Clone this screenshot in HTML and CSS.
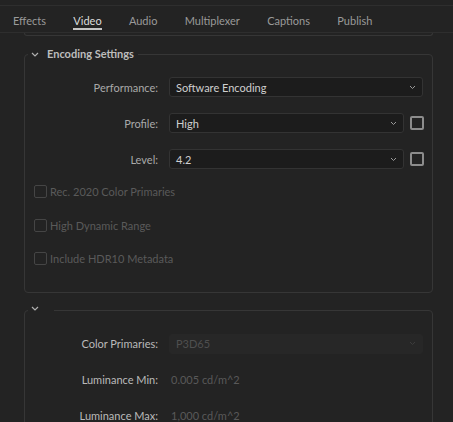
FILE: index.html
```html
<!DOCTYPE html>
<html>
<head>
<meta charset="utf-8">
<link rel="stylesheet" href="styles.css">
</head>
<body>
<div class="top"></div>
<nav class="tabs">
  <span class="tab">Effects</span>
  <span class="tab active">Video</span>
  <span class="tab">Audio</span>
  <span class="tab">Multiplexer</span>
  <span class="tab">Captions</span>
  <span class="tab">Publish</span>
</nav>
<main class="scroll">
  <div class="prev"></div>
  <fieldset class="panel enc">
    <legend class="legend"><svg class="chev" width="8" height="5" viewBox="0 0 8 5"><polyline points="1,1 4,4 7,1"/></svg><span>Encoding Settings</span></legend>
    <div class="rows">
      <div class="row">
        <label class="lbl">Performance:</label>
        <div class="select wide"><span>Software Encoding</span><svg class="dd" width="7" height="5" viewBox="0 0 7 5"><polyline points="1,1 3.5,3.5 6,1"/></svg></div>
      </div>
      <div class="row">
        <label class="lbl">Profile:</label>
        <div class="select"><span>High</span><svg class="dd" width="7" height="5" viewBox="0 0 7 5"><polyline points="1,1 3.5,3.5 6,1"/></svg></div>
        <span class="cb on"></span>
      </div>
      <div class="row">
        <label class="lbl">Level:</label>
        <div class="select"><span>4.2</span><svg class="dd" width="7" height="5" viewBox="0 0 7 5"><polyline points="1,1 3.5,3.5 6,1"/></svg></div>
        <span class="cb on"></span>
      </div>
    </div>
    <div class="checks">
      <div class="check"><span class="cb off"></span><span>Rec. 2020 Color Primaries</span></div>
      <div class="check"><span class="cb off"></span><span>High Dynamic Range</span></div>
      <div class="check"><span class="cb off"></span><span>Include HDR10 Metadata</span></div>
    </div>
  </fieldset>
  <fieldset class="panel hdr">
    <legend class="legend small"><svg class="chev" width="8" height="5" viewBox="0 0 8 5"><polyline points="1,1 4,4 7,1"/></svg></legend>
    <div class="rows">
      <div class="row">
        <label class="lbl bright">Color Primaries:</label>
        <div class="select wide disabled"><span>P3D65</span><svg class="dd" width="7" height="5" viewBox="0 0 7 5"><polyline points="1,1 3.5,3.5 6,1"/></svg></div>
      </div>
      <div class="row">
        <label class="lbl bright">Luminance Min:</label>
        <span class="val">0.005 cd/m^2</span>
      </div>
      <div class="row">
        <label class="lbl bright">Luminance Max:</label>
        <span class="val">1,000 cd/m^2</span>
      </div>
    </div>
  </fieldset>
</main>
</body>
</html>
```

FILE: styles.css
```css
* { box-sizing: border-box; }
html, body {
  margin: 0;
  padding: 0;
  background: #232323;
  height: 100%;
  overflow: hidden;
}
body {
  font-family: Lato, "Liberation Sans", sans-serif;
  font-size: 11px;
  color: #b0b0b0;
}
.top {
  height: 6px;
  border-bottom: 1px solid #2e2e2e;
}
.tabs {
  display: flex;
  gap: 27.3px;
  padding-left: 13px;
  height: 27px;
  border-bottom: 1px solid #2e2e2e;
  font-size: 11px;
}
.tab {
  color: #9a9a9a;
  padding-top: 3px;
  line-height: 23px;
  height: 26px;
  position: relative;
}
.tab.active {
  color: #dcdcdc;
}
.tab.active::after {
  content: "";
  position: absolute;
  left: 0;
  right: 0;
  top: 22px;
  height: 2px;
  background: #c4c4c4;
}
.scroll {
  padding: 0 20px 0 24px;
}
.prev {
  height: 3px;
  border: 1px solid #363636;
  border-top: none;
  border-radius: 0 0 3px 3px;
}
.panel {
  margin: 11px 0 0 0;
  padding: 16px 9px 23px 0;
  border: 1px solid #363636;
  border-radius: 4px;
  min-width: 0;
}
.legend {
  display: flex;
  align-items: center;
  margin-left: 3px;
  padding: 0 4px 0 3px;
  height: 14px;
  font-weight: 700;
  color: #bdbdbd;
  font-size: 11px;
}
.legend span {
  position: relative;
  top: -1px;
}
.legend .chev {
  margin-right: 8px;
  fill: none;
  stroke: #b0b0b0;
  stroke-width: 1.2;
}
.legend.small {
  align-items: flex-start;
  padding: 2px 15px 0 3px;
}
.legend.small .chev {
  margin-right: 0;
}
.rows {
  display: flex;
  flex-direction: column;
  gap: 16px;
}
.row {
  display: grid;
  grid-template-columns: 139px 1fr 14px;
  column-gap: 5px;
  align-items: center;
  height: 20px;
}
.lbl {
  text-align: right;
  padding-right: 6px;
  color: #a9a9a9;
}
.lbl.bright {
  color: #bababa;
}
.select {
  display: flex;
  align-items: center;
  justify-content: space-between;
  height: 20px;
  background: #1c1c1c;
  border: 1px solid #333333;
  border-radius: 3px;
  padding: 0 6px 0 6px;
  color: #cfcfcf;
}
.select.wide {
  grid-column: 2 / 4;
}
.select .dd {
  fill: none;
  stroke: #9a9a9a;
  stroke-width: 1;
}
.select.disabled {
  background: #272727;
  border-color: #272727;
  color: #4f4f4f;
}
.select.disabled .dd {
  stroke: #3c3c3c;
}
.val {
  grid-column: 2 / 4;
  padding-left: 2px;
  color: #595959;
}
.cb {
  display: block;
  width: 14px;
  height: 14px;
  border-radius: 2px;
}
.cb.on {
  justify-self: end;
  margin-right: -1px;
  border: 2px solid #8c8c8c;
}
.checks {
  display: flex;
  flex-direction: column;
  gap: 13.5px;
  margin-top: 12.5px;
  padding-left: 9px;
}
.check {
  display: flex;
  align-items: center;
  gap: 3px;
  height: 20px;
  color: #5a5a5a;
}
.cb.off {
  width: 13px;
  height: 13px;
  border: 1.5px solid #454545;
}
```
